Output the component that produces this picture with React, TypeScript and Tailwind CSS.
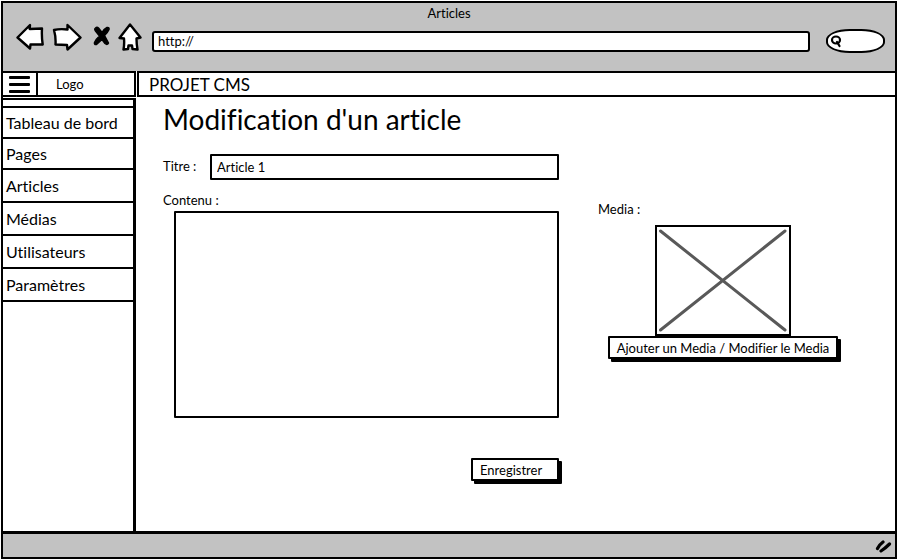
import type { ReactNode } from "react";

const navItems = [
  { label: "Tableau de bord", size: "h-[31px]" },
  { label: "Pages", size: "h-[31px]" },
  { label: "Articles", size: "h-[33px]" },
  { label: "Médias", size: "h-[33px]" },
  { label: "Utilisateurs", size: "h-[33px]" },
  { label: "Paramètres", size: "h-[33px]" },
];

function IconButton({ label, children }: { label: string; children: ReactNode }) {
  return (
    <button type="button" aria-label={label} className="block shrink-0">
      {children}
    </button>
  );
}

const outline = {
  fill: "white",
  stroke: "black",
  strokeWidth: 2.4,
  strokeLinejoin: "round" as const,
  strokeLinecap: "round" as const,
};

function BrowserBar() {
  return (
    <header className="h-[68px] bg-[#c2c2c2]">
      <p className="h-[18px] text-center text-[13px] leading-5">Articles</p>
      <div className="flex items-center pr-[10px] pl-[13px]">
        <IconButton label="Précédent">
          <svg width="28" height="28" viewBox="0 0 28 28" {...outline}>
            <path d="M1.500 14.500 L14 2 L13.700 6 L26 5.500 Q25.500 14 26.700 21.500 L14.500 21.500 L14 25.500 Z" />
          </svg>
        </IconButton>
        <div className="ml-2">
          <IconButton label="Suivant">
            <svg width="30" height="28" viewBox="0 0 30 28" {...outline}>
              <path d="M2 7 Q8 5.500 15.500 6.500 L15.500 2 L28.500 14.500 L15.500 26.500 L15 22 L3.500 21.500 Q4 14 2 7 Z" />
            </svg>
          </IconButton>
        </div>
        <div className="ml-2.5">
          <IconButton label="Arrêter">
            <svg width="20" height="28" viewBox="0 0 20 28" stroke="black" strokeWidth="1.500" strokeLinejoin="round">
              <path d="M3.500 5 Q2 6 3.500 8 L7.500 13 Q4 16 2.500 19.500 Q2 22 4.500 21.500 L10 16.500 L13 20.500 Q15.500 22.500 16.500 20 L12.500 12.500 Q16 9 17 6.500 Q17.500 4 15 4.500 Q12 6 10 9.500 L6.500 5 Q5 3.500 3.500 5 Z" />
            </svg>
          </IconButton>
        </div>
        <div className="ml-1.5">
          <IconButton label="Accueil">
            <svg width="24" height="28" viewBox="0 0 24 28" {...outline}>
              <path d="M12 1.500 L22.500 14.500 L18.500 15.500 Q18.500 21 19.500 26.500 L14.500 26 L14 22.500 L10.500 22.500 L10 26 L5.500 26.500 Q6.500 21 6 15.500 L1.500 15 Z" />
            </svg>
          </IconButton>
        </div>
        <input
          type="text"
          aria-label="Adresse"
          defaultValue="http://"
          className="mt-2 ml-2.5 h-[21px] min-w-0 flex-1 rounded-[3px] border-2 border-black bg-white px-1 text-[13px] outline-none"
        />
        <label className="mt-2 ml-4 flex h-6 w-[59px] shrink-0 items-center rounded-[40%/45%] border-2 border-black bg-white pl-0.5">
          <svg width="12" height="14" viewBox="0 0 12 14" fill="none" stroke="black" strokeWidth="2.200" strokeLinecap="round">
            <ellipse cx="6" cy="6" rx="4" ry="3.500" />
            <path d="M7 8 L9.500 12" />
          </svg>
          <input type="text" aria-label="Rechercher" className="w-8 bg-transparent text-[13px] outline-none" />
        </label>
      </div>
    </header>
  );
}

function TopBar() {
  return (
    <div className="flex h-[26px]">
      <button
        type="button"
        aria-label="Menu"
        className="flex w-[35px] shrink-0 flex-col items-center justify-center gap-1 border-2 border-l-0 border-black"
      >
        <span className="h-[3px] w-[21px] rounded-[1px] bg-black" />
        <span className="h-[3px] w-[21px] rounded-[1px] bg-black" />
        <span className="h-[3px] w-[21px] rounded-[1px] bg-black" />
      </button>
      <div className="w-[98px] shrink-0 border-y-2 border-r-2 border-black pl-[18px] text-[13px] leading-[22px]">
        Logo
      </div>
      <div className="ml-px flex-1 border-2 border-r-0 border-black bg-white pl-2.5 text-[17px] leading-6">
        PROJET CMS
      </div>
    </div>
  );
}

function Sidebar() {
  return (
    <nav className="mt-px w-[133px] shrink-0 border-t-2 border-r-3 border-black">
      <div className="h-2 border-b-2 border-black" />
      <ul>
        {navItems.map((item) => (
          <li key={item.label} className={`${item.size} border-b-2 border-black`}>
            <a href="#" className="flex h-full items-center pl-[3px] text-base whitespace-nowrap">
              {item.label}
            </a>
          </li>
        ))}
      </ul>
    </nav>
  );
}

function ActionButton({ children }: { children: ReactNode }) {
  return (
    <button
      type="button"
      className="h-[23px] min-w-[88px] rounded-[1px] border-2 border-black bg-white px-[7px] text-left text-[13px] leading-4 whitespace-nowrap shadow-[3px_3px_0_#000]"
    >
      {children}
    </button>
  );
}

function MediaPanel() {
  return (
    <section className="mt-25 w-[244px] shrink-0">
      <h2 className="text-[13px] leading-5">Media :</h2>
      <div className="mt-1.5 flex flex-col items-center pl-1.5">
        <div className="h-[111px] w-[136px] border-2 border-black">
          <svg width="132" height="107" viewBox="0 0 132 107" role="img" aria-label="Media">
            <path
              d="M3.500 4 L128 103 M128 4 L3.500 103"
              stroke="#595959"
              strokeWidth="3"
              strokeLinecap="round"
            />
          </svg>
        </div>
        <ActionButton>Ajouter un Media / Modifier le Media</ActionButton>
      </div>
    </section>
  );
}

function ArticleForm() {
  return (
    <main className="flex flex-1 gap-[39px] pt-0.5 pr-[53px] pl-[27px]">
      <form className="min-w-0 flex-1">
        <h1 className="text-[28px] leading-10 whitespace-nowrap">Modification d'un article</h1>
        <div className="mt-[15px] flex items-center">
          <label htmlFor="titre" className="w-[47px] text-[13px]">
            Titre :
          </label>
          <input
            id="titre"
            type="text"
            defaultValue="Article 1"
            className="h-[26px] min-w-0 flex-1 rounded-[1px] border-2 border-black px-[5px] text-[13px] outline-none"
          />
        </div>
        <label htmlFor="contenu" className="mt-2.5 block text-[13px] leading-5">
          Contenu :
        </label>
        <div className="pl-[11px]">
          <textarea
            id="contenu"
            className="mt-px block h-[207px] w-full resize-none rounded-[1px] border-2 border-black p-1 text-[13px] outline-none"
          />
        </div>
        <div className="mt-10 flex justify-end">
          <ActionButton>Enregistrer</ActionButton>
        </div>
      </form>
      <MediaPanel />
    </main>
  );
}

export default function App() {
  return (
    <div className="flex min-h-screen flex-col bg-white p-px font-['Lato','Open_Sans',sans-serif] text-black [font-variant-ligatures:none]">
      <div className="flex flex-1 flex-col border-2 border-black">
        <BrowserBar />
        <TopBar />
        <div className="flex flex-1">
          <Sidebar />
          <ArticleForm />
        </div>
        <footer className="flex h-[26px] items-center justify-end border-t-3 border-black bg-[#c2c2c2] pr-[3px]">
          <svg width="17" height="14" viewBox="0 0 17 14" fill="none" stroke="black" strokeWidth="3.200" strokeLinecap="round">
            <path d="M2.500 9.500 Q4.500 5.500 8 3 M6 12 Q10 9.500 14.500 5" />
          </svg>
        </footer>
      </div>
    </div>
  );
}
